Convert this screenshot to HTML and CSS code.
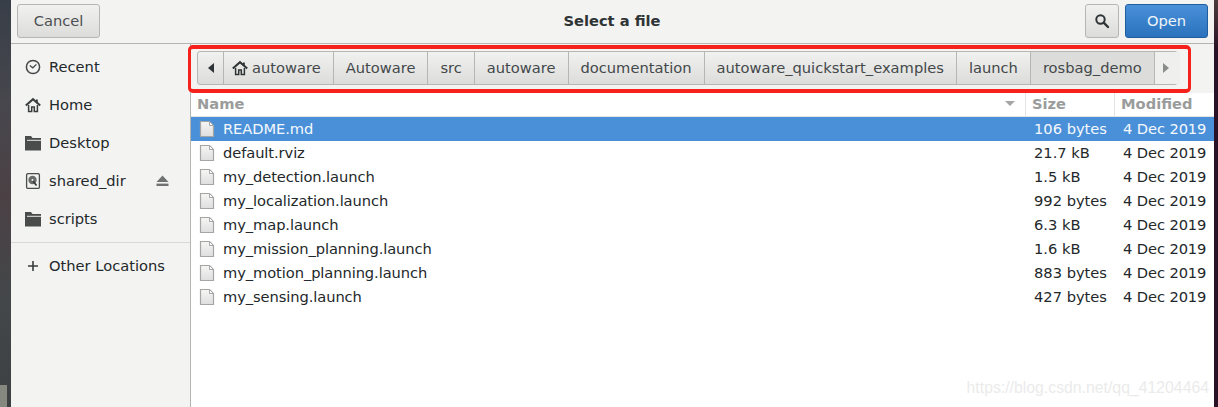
FILE: index.html
```html
<!DOCTYPE html>
<html lang="en">

<head>
  <meta charset="UTF-8">
  <title>Select a file</title>
  <link rel="stylesheet" href="styles.css">
</head>

<body>
  <div class="desk-left"><div class="desk-spot"></div></div>
  <div class="dialog">
    <header class="head">
      <button class="btn btn-cancel">Cancel</button>
      <div class="title">Select a file</div>
      <button class="btn btn-search">
        <svg width="16" height="16" viewBox="0 0 16 16"><circle cx="6.5" cy="6.5" r="4.2" fill="none" stroke="#2e3436" stroke-width="2"/><path d="M9.7 9.7 14 14" stroke="#2e3436" stroke-width="2.4" stroke-linecap="round"/></svg>
      </button>
      <button class="btn btn-open">Open</button>
    </header>
    <div class="content">
      <aside class="side">
        <ul class="places">
          <li>
            <svg class="ico" width="16" height="16" viewBox="0 0 16 16"><circle cx="8" cy="8" r="6.6" fill="none" stroke="#454748" stroke-width="1.5"/><path d="M4.8 6.6 7.8 8.8 11.4 5.4" fill="none" stroke="#454748" stroke-width="1.3"/></svg>
            <span>Recent</span>
          </li>
          <li>
            <svg class="ico" width="16" height="16" viewBox="0 0 16 16"><path d="M0.8 8.6 8 2.2 15.2 8.6" fill="none" stroke="#3a3d3e" stroke-width="2"/><path d="M3.6 8V14.4H6.7V10H9.3V14.4H12.4V8" fill="none" stroke="#3a3d3e" stroke-width="1.5"/><rect x="11" y="2.5" width="1.8" height="3" fill="#3a3d3e"/></svg>
            <span>Home</span>
          </li>
          <li>
            <svg class="ico" width="16" height="16" viewBox="0 0 16 16"><path d="M0 1H6L7.5 3H16V15.5H0Z" fill="#4a4c4c"/><rect x="2" y="4.8" width="14" height="1" fill="#e6e6e5"/></svg>
            <span>Desktop</span>
          </li>
          <li>
            <svg class="ico" width="16" height="16" viewBox="0 0 16 16"><rect x="1.6" y="0.6" width="12.8" height="14.8" rx="1.5" fill="#f3f3f2" stroke="#4a4c4c" stroke-width="1.3"/><circle cx="7.5" cy="7" r="4.2" fill="#6a6c6c"/><circle cx="7.5" cy="7" r="1" fill="#f3f3f2"/><path d="M8 8 11.5 12.5" stroke="#3a3d3e" stroke-width="1.8"/></svg>
            <span>shared_dir</span>
            <svg class="eject" width="13" height="12" viewBox="0 0 13 12"><path d="M6.5 0.5 12.5 7H0.5Z" fill="#6f7172"/><rect x="0.5" y="8.6" width="12" height="2.4" fill="#6f7172"/></svg>
          </li>
          <li>
            <svg class="ico" width="16" height="16" viewBox="0 0 16 16"><path d="M0 1H6L7.5 3H16V15.5H0Z" fill="#4a4c4c"/><rect x="2" y="4.8" width="14" height="1" fill="#e6e6e5"/></svg>
            <span>scripts</span>
          </li>
        </ul>
        <div class="side-sep"></div>
        <div class="other">
          <svg class="ico" width="16" height="16" viewBox="0 0 16 16"><path d="M8 3V13M3 8H13" stroke="#3a3d3e" stroke-width="1.6"/></svg>
          <span>Other Locations</span>
        </div>
      </aside>
      <main class="main">
        <div class="bar-wrap">
          <nav class="path">
            <a class="seg arrow first"><svg width="6" height="10" viewBox="0 0 6 10"><path d="M6 0V10L0 5Z" fill="#2e3436"/></svg></a>
            <a class="seg seg-home">
              <svg width="16" height="16" viewBox="0 0 16 16"><path d="M0.8 8.6 8 2.2 15.2 8.6" fill="none" stroke="#2e3436" stroke-width="2"/><path d="M3.6 8V14.4H6.7V10H9.3V14.4H12.4V8" fill="none" stroke="#2e3436" stroke-width="1.5"/><rect x="11" y="2.5" width="1.8" height="3" fill="#2e3436"/></svg>
              <span>autoware</span>
            </a>
            <a class="seg"><span>Autoware</span></a>
            <a class="seg"><span>src</span></a>
            <a class="seg"><span>autoware</span></a>
            <a class="seg"><span>documentation</span></a>
            <a class="seg"><span>autoware_quickstart_examples</span></a>
            <a class="seg"><span>launch</span></a>
            <a class="seg cur"><span>rosbag_demo</span></a>
            <a class="seg arrow off"><svg width="6" height="10" viewBox="0 0 6 10"><path d="M0 0V10L6 5Z" fill="#8a8c8c"/></svg></a>
          </nav>
          <div class="red-box"></div>
        </div>
        <div class="cols">
          <div class="col col-name">Name<svg class="sort" width="10" height="5" viewBox="0 0 10 5"><path d="M0 0H10L5 5Z" fill="#a4a6a6"/></svg></div>
          <div class="col col-size">Size</div>
          <div class="col col-mod">Modified</div>
        </div>
        <ul class="files" id="files"></ul>
      </main>
    </div>
    <div class="mark">https://blog.csdn.net/qq_41204464</div>
  </div>
  <div class="desk-right"></div>
  <script>
    var files = [
      ['README.md', '106 bytes'],
      ['default.rviz', '21.7 kB'],
      ['my_detection.launch', '1.5 kB'],
      ['my_localization.launch', '992 bytes'],
      ['my_map.launch', '6.3 kB'],
      ['my_mission_planning.launch', '1.6 kB'],
      ['my_motion_planning.launch', '883 bytes'],
      ['my_sensing.launch', '427 bytes']
    ];
    var icon = '<svg class="doc" width="16" height="18" viewBox="0 0 16 18"><defs><linearGradient id="pg" x1="0" y1="0" x2="0" y2="1"><stop offset="0" stop-color="#f6f6f5"/><stop offset="1" stop-color="#dedede"/></linearGradient></defs><path d="M1.5 1.5H10.5L14.5 5.5V16.5H1.5Z" fill="url(#pg)" stroke="#a4a6a6" stroke-width="1.2"/><path d="M10.5 1.5V5.5H14.5Z" fill="#fff" stroke="#a4a6a6"/></svg>';
    var list = document.getElementById('files');
    files.forEach((item, index) => {
      var li = document.createElement('li');
      li.className = index == 0 ? 'row sel' : 'row';
      li.innerHTML = '<div class="c-name">' + icon + '<span>' + item[0] + '</span></div><div class="c-size"><span>' + item[1] + '</span></div><div class="c-mod"><span>4 Dec 2019</span></div>';
      list.appendChild(li);
    });
  </script>
</body>

</html>
```
FILE: styles.css
```css
html,
body {
  margin: 0;
  padding: 0;
  height: 407px;
  overflow: hidden;
}

body {
  display: flex;
  font-family: "DejaVu Sans", sans-serif;
  font-size: 14.67px;
  color: #2e3436;
}

ul {
  list-style: none;
  padding: 0;
  margin: 0;
}

.desk-left {
  width: 11px;
  display: flex;
  align-items: flex-end;
  background: linear-gradient(#383e48, #47474d 25%, #4b4145 48%, #43474a 75%, #3d4042);
}

.desk-spot {
  width: 7px;
  height: 22px;
  background-color: #85887f;
}

.desk-right {
  width: 4px;
  background: linear-gradient(#4a3c3a, #2a1226 50px);
}

.dialog {
  position: relative;
  width: 1203px;
  display: flex;
  flex-direction: column;
}

.head {
  height: 44px;
  box-sizing: border-box;
  padding: 4px 6px 0 6px;
  display: flex;
  align-items: flex-start;
  background-color: #f3f3f2;
  border-bottom: 1px solid #b4b4b2;
}

.btn {
  height: 34px;
  box-sizing: border-box;
  border: 1px solid #b6b6b3;
  border-radius: 3px;
  background: linear-gradient(#f1f1f0, #dcdcda);
  font-family: inherit;
  font-size: 14.67px;
  color: #4c5052;
  padding: 0 0 2px 0;
}

.btn-cancel {
  width: 83px;
}

.title {
  flex: 1;
  text-align: center;
  font-weight: bold;
  line-height: 34px;
  color: #2e3436;
  padding-left: 39px;
}

.btn-search {
  width: 34px;
  padding: 0;
  display: flex;
  align-items: center;
  justify-content: center;
}

.btn-open {
  width: 83px;
  margin-left: 6px;
  border-color: #1f5d9f;
  background: linear-gradient(#4a90d9, #2a72bd);
  color: #eef4fa;
}

.content {
  flex: 1;
  display: flex;
  min-height: 0;
}

.side {
  width: 180px;
  box-sizing: border-box;
  background-color: #f3f3f2;
  border-right: 1px solid #b4b4b2;
  padding-top: 4px;
}

.places li,
.other {
  display: flex;
  align-items: center;
  height: 38px;
  padding-left: 14px;
  color: #23282a;
}

.places span,
.other span,
.seg span,
.row span {
  margin-bottom: 2px;
}

.ico {
  margin-right: 8px;
  flex: none;
}

.eject {
  margin-left: auto;
  margin-right: 21px;
}

.side-sep {
  height: 1px;
  margin-top: 4px;
  background-color: #d8d8d6;
}

.other {
  height: 46px;
}

.main {
  flex: 1;
  min-width: 0;
  background-color: #fff;
}

.bar-wrap {
  position: relative;
  height: 49px;
  box-sizing: border-box;
  padding: 7px 36px 0 6px;
  background-color: #f3f3f2;
}

.path {
  display: flex;
  height: 34px;
  box-sizing: border-box;
  border: 1px solid #b6b6b3;
  border-radius: 3px;
  background: linear-gradient(#f1f1f0, #dcdcda);
}

.seg {
  flex: none;
  display: flex;
  align-items: center;
  gap: 4px;
  padding: 0 12px;
  border-right: 1px solid #b6b6b3;
  color: #43484a;
  white-space: nowrap;
}

.seg-home {
  padding: 0 12px 0 8px;
}

.seg.arrow {
  width: 25px;
  box-sizing: border-box;
  padding: 0;
  justify-content: center;
}

.seg.first {
  width: 26px;
}

.seg.cur {
  background-color: #dcdcda;
  flex: 1;
}

.seg.off {
  border-right: 0;
  background-color: #efefee;
  padding-right: 2px;
}

.red-box {
  position: absolute;
  left: -3px;
  top: 1px;
  width: 997px;
  height: 40px;
  border-style: solid;
  border-color: #f5211a;
  border-width: 4px 3px;
  border-radius: 5px;
}

.cols {
  display: flex;
  height: 24px;
  box-sizing: border-box;
  border-bottom: 1px solid #e4e4e2;
  font-weight: bold;
  color: #9a9c9c;
  line-height: 21px;
}

.col {
  box-sizing: border-box;
  padding-left: 6px;
  padding-bottom: 2px;
  border-right: 1px solid #e4e4e2;
}

.col-name {
  width: 835px;
  display: flex;
  align-items: center;
  justify-content: space-between;
  padding-right: 10px;
}

.col-size {
  width: 89px;
}

.col-mod {
  flex: 1;
  border-right: 0;
}

.row {
  display: flex;
  align-items: center;
  height: 24px;
  color: #23282a;
}

.row.sel {
  background-color: #4a90d9;
  color: #f4f8fc;
}

.c-name {
  width: 835px;
  display: flex;
  align-items: center;
  padding-left: 8px;
  box-sizing: border-box;
  letter-spacing: -0.08px;
}

.doc {
  margin-right: 8px;
}

.c-size {
  width: 89px;
  box-sizing: border-box;
  padding-left: 8px;
  display: flex;
  align-items: center;
}

.c-mod {
  flex: 1;
  padding-left: 8px;
  white-space: nowrap;
  display: flex;
  align-items: center;
  letter-spacing: -0.1px;
}

.mark {
  position: absolute;
  right: 5px;
  top: 379px;
  font-family: "Liberation Sans", sans-serif;
  font-size: 15.8px;
  color: #ebebeb;
}
```
